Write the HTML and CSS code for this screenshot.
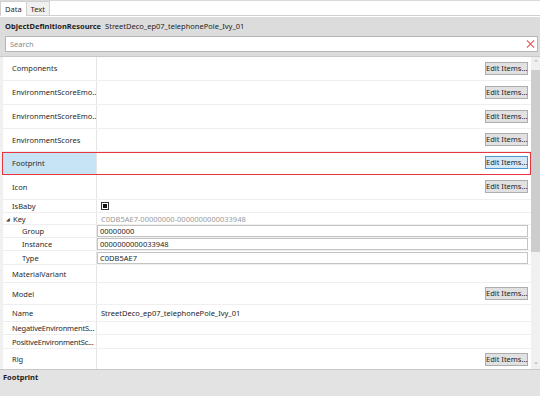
FILE: index.html
```html
<!DOCTYPE html>
<html lang="en">
<head>
  <meta charset="UTF-8">
  <title>Property Grid</title>
  <link rel="stylesheet" href="styles.css">
</head>
<body>
  <div class="tabs">
    <span class="tab active">Data</span>
    <span class="tab">Text</span>
  </div>

  <div class="panel">
    <div class="header">
      <span class="type-name">ObjectDefinitionResource</span>
      <span>StreetDeco_ep07_telephonePole_Ivy_01</span>
    </div>

    <div class="search">
      <span class="placeholder">Search</span>
      <svg class="clear" width="10" height="10" viewBox="0 0 10 10">
        <path d="M1 1 L9 9 M9 1 L1 9" stroke="#e2585e" stroke-width="1.3" fill="none"/>
      </svg>
    </div>

    <div class="grid-wrap">
      <div class="grid">
        <div class="row h24"><div class="name">Components</div><div class="value"><button class="edit">Edit Items...</button></div></div>
        <div class="row h24"><div class="name">EnvironmentScoreEmo...</div><div class="value"><button class="edit">Edit Items...</button></div></div>
        <div class="row h24"><div class="name">EnvironmentScoreEmo...</div><div class="value"><button class="edit">Edit Items...</button></div></div>
        <div class="row h23"><div class="name">EnvironmentScores</div><div class="value"><button class="edit">Edit Items...</button></div></div>
        <div class="row h23 selected"><div class="name">Footprint</div><div class="value"><button class="edit hot">Edit Items...</button></div></div>
        <div class="row h25"><div class="name">Icon</div><div class="value"><button class="edit">Edit Items...</button></div></div>
        <div class="row h14"><div class="name">IsBaby</div><div class="value"><span class="check"></span></div></div>
        <div class="row h12"><div class="name"><span class="expander">&#9698;</span>Key</div><div class="value muted">C0DB5AE7-00000000-0000000000033948</div></div>
        <div class="row h13"><div class="name sub">Group</div><div class="value"><span class="field">00000000</span></div></div>
        <div class="row h13"><div class="name sub">Instance</div><div class="value"><span class="field">0000000000033948</span></div></div>
        <div class="row h14"><div class="name sub">Type</div><div class="value"><span class="field">C0DB5AE7</span></div></div>
        <div class="row h18"><div class="name">MaterialVariant</div><div class="value"></div></div>
        <div class="row h22"><div class="name">Model</div><div class="value"><button class="edit">Edit Items...</button></div></div>
        <div class="row h17"><div class="name">Name</div><div class="value">StreetDeco_ep07_telephonePole_Ivy_01</div></div>
        <div class="row h13"><div class="name tight">NegativeEnvironmentS...</div><div class="value"></div></div>
        <div class="row h14"><div class="name tight">PositiveEnvironmentSc...</div><div class="value"></div></div>
        <div class="row h20 last"><div class="name">Rig</div><div class="value"><button class="edit">Edit Items...</button></div></div>
      </div>
      <div class="scrollbar">
        <span class="arrow">&#8963;</span>
        <div class="track"><div class="thumb"></div></div>
        <span class="arrow down">&#8964;</span>
      </div>
    </div>

    <div class="desc">Footprint</div>
  </div>
</body>
</html>
```

FILE: styles.css
```css
body {
  margin: 0;
  width: 540px;
  height: 396px;
  overflow: hidden;
  background: #fff;
  font-family: "Noto Sans", "Open Sans", sans-serif;
  font-size: 7.5px;
  color: #1e1e1e;
}
.tabs {
  display: flex;
  height: 16px;
  border-top: 1px solid #d9d9d9;
  border-bottom: 1px solid #d0d0d0;
  box-sizing: border-box;
  align-items: flex-end;
}
.tab {
  height: 14px;
  padding: 0 4px;
  display: flex;
  align-items: center;
  border: 1px solid #d0d0d0;
  border-bottom: none;
  background: #f0f0f0;
  box-sizing: border-box;
  margin-left: -1px;
}
.tab.active {
  background: #fff;
  margin-left: 0;
  height: 15px;
  margin-bottom: -1px;
}
.panel {
  display: flex;
  flex-direction: column;
  height: 380px;
}
.header {
  background: #dcdcdc;
  height: 18px;
  display: flex;
  align-items: center;
  gap: 4px;
  padding: 0 5px;
  margin-top: 1px;
}
.type-name {
  font-weight: bold;
}
.search {
  background: #dcdcdc;
  padding: 1px 2px 4px 5px;
  display: flex;
}
.search .placeholder {
  flex: 1;
  height: 16px;
  box-sizing: border-box;
  background: #fff;
  border: 1px solid #b5b5b5;
  border-right: none;
  color: #8a8a8a;
  display: flex;
  align-items: center;
  padding-left: 4px;
}
.search .clear {
  background: #fff;
  border: 1px solid #b5b5b5;
  border-left: none;
  height: 16px;
  width: 12px;
  box-sizing: border-box;
  padding: 2px 2px 2px 0;
}
.grid-wrap {
  display: flex;
  height: 313px;
  border-top: 1px solid #c8c8c8;
  box-sizing: border-box;
}
.grid {
  flex: 1;
  display: flex;
  flex-direction: column;
  border-left: 3px solid #f0f0f0;
}
.row {
  display: grid;
  grid-template-columns: 94px 1fr;
  border-bottom: 1px solid #efefef;
  box-sizing: border-box;
}
.row.last {
  border-bottom: none;
}
.h12 { height: 12px; }
.h13 { height: 13px; }
.h14 { height: 14px; }
.h17 { height: 17px; }
.h18 { height: 18px; }
.h20 { height: 20px; }
.h22 { height: 22px; }
.h23 { height: 23px; }
.h24 { height: 24px; }
.h25 { height: 25px; }
.name {
  display: flex;
  align-items: center;
  padding-left: 9px;
  border-right: 1px solid #e6e6e6;
  white-space: nowrap;
  overflow: hidden;
  color: #2a2a2a;
}
.name.tight {
  letter-spacing: -0.2px;
}
.name.sub {
  padding-left: 19px;
}
.expander {
  font-size: 5px;
  width: 7px;
  margin-left: -6px;
  color: #444;
}
.value {
  display: flex;
  align-items: center;
  padding-left: 4px;
  padding-right: 3px;
  white-space: nowrap;
}
.value.muted {
  color: #9a9a9a;
}
.selected {
  outline: 1px solid #e8353d;
  outline-offset: -1px;
  margin-left: -1px;
  padding-left: 1px;
  position: relative;
}
.selected .name {
  background: #c7e3f6;
}
.edit {
  margin-left: auto;
  font: inherit;
  color: #1e1e1e;
  background: #e1e1e1;
  border: 1px solid #adadad;
  height: 13px;
  width: 43px;
  padding: 0;
  line-height: 11px;
}
.edit.hot {
  background: #d5eaf9;
  border-color: #4e95d1;
}
.check {
  width: 6px;
  height: 6px;
  border: 1px solid #333;
  background: #fff;
  display: flex;
  align-items: center;
  justify-content: center;
}
.check::after {
  content: "";
  width: 4px;
  height: 4px;
  background: #111;
}
.field {
  flex: 1;
  height: 12px;
  box-sizing: border-box;
  border: 1px solid #c4c4c4;
  display: flex;
  align-items: center;
  padding-left: 2px;
  margin-left: -4px;
}
.scrollbar {
  width: 9px;
  background: #f0f0f0;
  display: flex;
  flex-direction: column;
  align-items: center;
}
.arrow {
  font-size: 7px;
  color: #9a9a9a;
  height: 10px;
  line-height: 12px;
}
.arrow.down {
  line-height: 6px;
}
.track {
  flex: 1;
  width: 100%;
  padding-top: 3px;
  box-sizing: border-box;
}
.thumb {
  height: 182px;
  background: #cdcdcd;
  width: 100%;
}
.desc {
  flex: 1;
  background: #e3e3e3;
  border-top: 1px solid #c8c8c8;
  font-weight: bold;
  padding: 2px 3px;
}
```
